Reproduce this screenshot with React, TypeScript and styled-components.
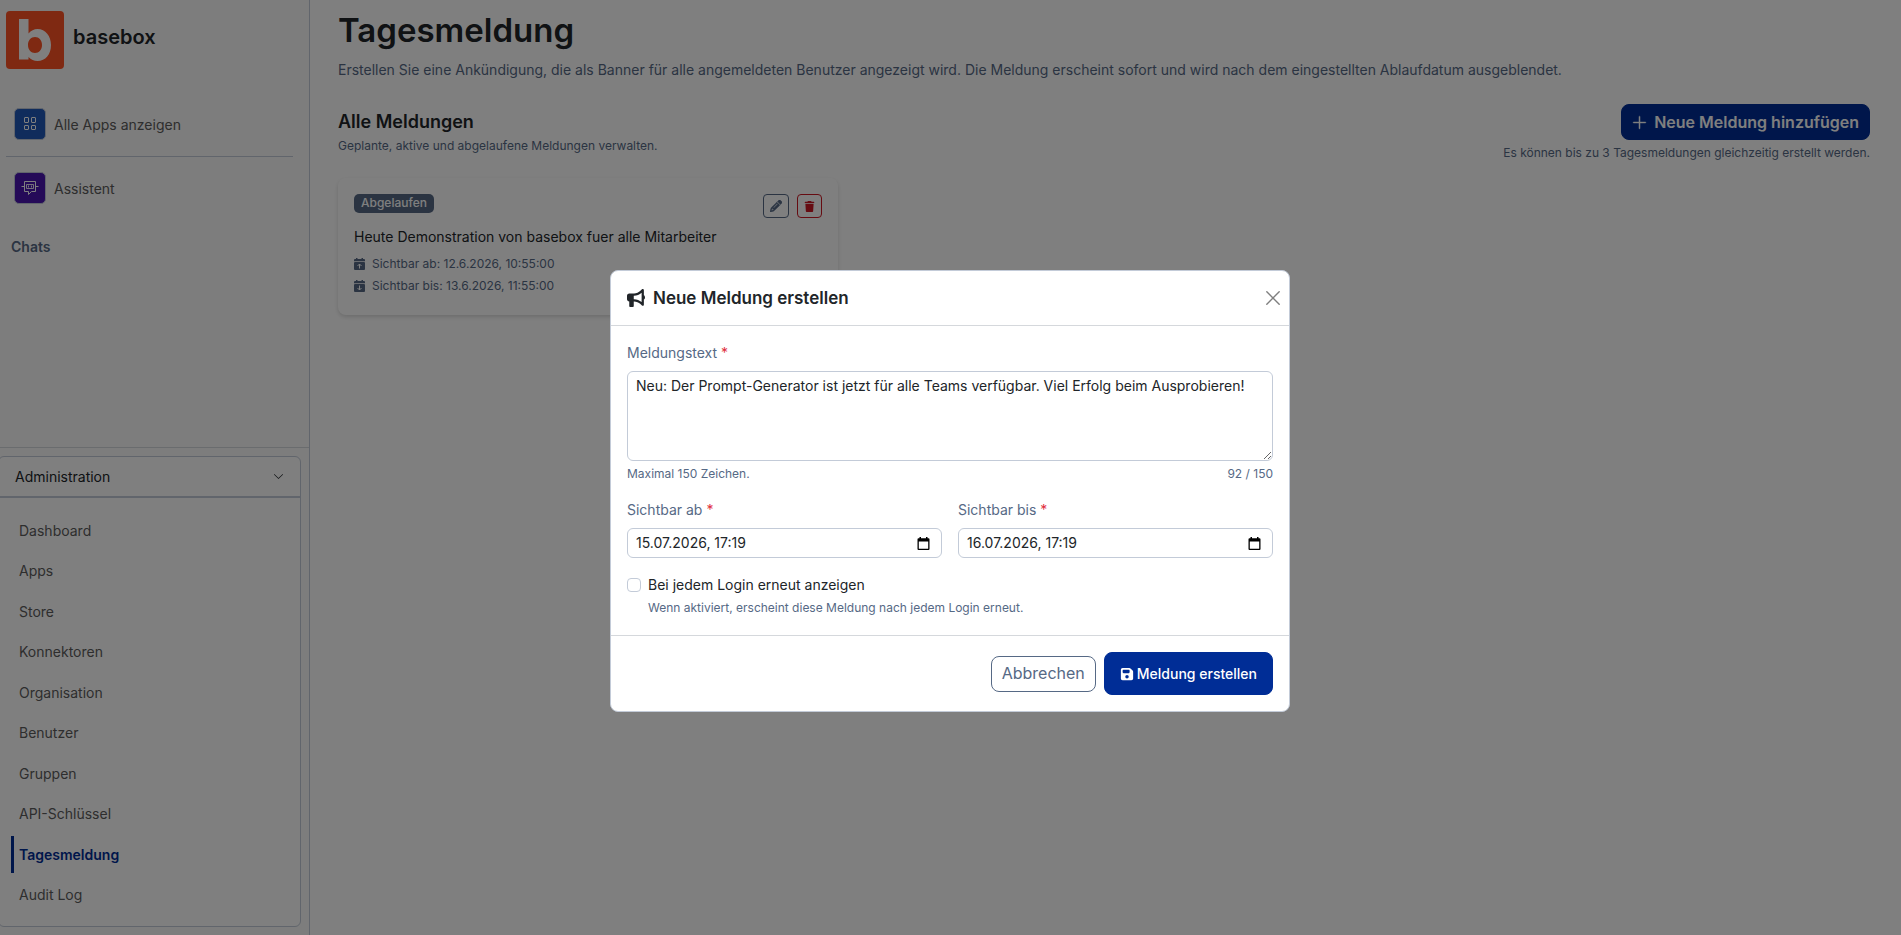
import React, { useState } from "react";
import styled, { createGlobalStyle, css } from "styled-components";
import { FaBullhorn, FaTrash, FaPencil, FaFloppyDisk } from "react-icons/fa6";
import { BsChevronDown, BsPlusLg } from "react-icons/bs";

const slate = "#566985";
const line = "#c3cbd8";
const ink = "#212529";
const primary = "#002d96";

const GlobalStyle = createGlobalStyle`
  *, *::before, *::after { box-sizing: border-box; }
  html, body, #root { height: 100%; }
  body {
    margin: 0;
    font-family: Inter, "Liberation Sans", sans-serif;
    font-size: 14px;
    line-height: 21px;
    color: ${ink};
    background: #fff;
  }
  button, input, textarea { font: inherit; color: inherit; }
  h1, h2, h3, p, ul { margin: 0; padding: 0; }
  ul { list-style: none; }
`;

const Page = styled.div`
  display: flex;
  min-height: 100%;
`;

const Sidebar = styled.aside`
  flex: 0 0 310px;
  display: flex;
  flex-direction: column;
  background: #fafafa;
  border-right: 1px solid ${line};
`;

const SidebarTop = styled.div`
  flex: 1;
  padding: 11px 16px 0 6px;
`;

const Brand = styled.a`
  display: flex;
  gap: 9px;
  color: ${ink};
  text-decoration: none;
  font-size: 20px;
  font-weight: 600;
  line-height: 52px;
`;

const AppLink = styled.a`
  display: flex;
  align-items: center;
  gap: 8px;
  height: 32px;
  padding-left: 8px;
  color: #5c5c5c;
  text-decoration: none;
`;

const AppIcon = styled.span<{ $color: string }>`
  display: flex;
  align-items: center;
  justify-content: center;
  width: 32px;
  height: 32px;
  border: 1px solid ${line};
  border-radius: 5px;
  background: ${(p) => p.$color};
  color: #fff;
`;

const AppNav = styled.nav`
  margin-top: 39px;
`;

const Divider = styled.hr`
  height: 1px;
  margin: 16px 0 15px;
  border: 0;
  background: ${line};
`;

const ChatsHeading = styled.h3`
  margin: 32px 5px 0;
  font-size: 14px;
  font-weight: 600;
  color: ${slate};
`;

const AdminSection = styled.section`
  display: flex;
  min-height: 488px;
  padding: 8px 8px 8px 0;
  border-top: 1px solid #d5d8dc;
`;

const AdminCard = styled.div`
  flex: 1;
  display: flex;
  flex-direction: column;
  margin-left: -2px;
  border: 1px solid ${line};
  border-radius: 6px;
  background: #fff;
`;

const AdminToggle = styled.button`
  display: flex;
  align-items: center;
  justify-content: space-between;
  height: 41px;
  padding: 0 16px;
  border: 0;
  border-bottom: 2px solid ${line};
  background: none;
`;

const AdminList = styled.ul`
  flex: 1;
  display: flex;
  flex-direction: column;
  justify-content: space-between;
  padding: 14px 12px 13px;
`;

const AdminLink = styled.a<{ $active?: boolean }>`
  display: block;
  padding: 8px 5px;
  border-left: 3px solid transparent;
  color: #5c5c5c;
  text-decoration: none;
  ${(p) =>
    p.$active &&
    css`
      border-color: ${primary};
      color: ${primary};
      font-weight: 600;
    `}
`;

const Main = styled.main`
  flex: 1;
  min-width: 0;
  padding: 11px 31px 32px 28px;
`;

const Title = styled.h1`
  font-size: 33px;
  line-height: 38px;
  font-weight: 600;
`;

const Lead = styled.p`
  margin-top: 10px;
  color: ${slate};
`;

const Note = styled.p`
  font-size: 12px;
  line-height: 18px;
  color: ${slate};
`;

const SectionHead = styled.header`
  display: flex;
  justify-content: space-between;
  margin-top: 24px;
`;

const SectionTitle = styled.h2`
  margin: 7px 0 4px;
  font-size: 18px;
  line-height: 22px;
  font-weight: 600;
`;

const SectionActions = styled.div`
  display: flex;
  flex-direction: column;
  align-items: flex-end;
  gap: 4px;
`;

const Button = styled.button<{ $look: "add" | "cancel" | "save" }>`
  display: inline-flex;
  align-items: center;
  border: 1px solid ${primary};
  border-radius: 8px;
  background: ${primary};
  color: #fff;
  ${(p) =>
    p.$look === "add" &&
    css`
      gap: 6px;
      height: 36px;
      padding: 0 10px 0 9px;
      font-size: 16px;
      font-weight: 600;
    `}
  ${(p) =>
    p.$look === "cancel" &&
    css`
      height: 36px;
      padding: 0 10px;
      font-size: 16px;
      border-color: ${slate};
      background: #fff;
      color: ${slate};
    `}
  ${(p) =>
    p.$look === "save" &&
    css`
      gap: 3px;
      height: 43px;
      padding: 0 15px;
      font-weight: 500;
    `}
`;

const MessageCard = styled.article`
  width: 500px;
  max-width: 100%;
  margin-top: 16px;
  padding: 16px 16px 18px;
  border-radius: 8px;
  background: #fff;
  box-shadow: 0 2px 4px rgba(0, 0, 0, 0.15);
`;

const CardTop = styled.div`
  display: flex;
  justify-content: space-between;
  align-items: flex-start;
`;

const Badge = styled.span`
  padding: 0 7px 1px;
  border-radius: 5px;
  background: ${slate};
  color: #fff;
  font-size: 12px;
  line-height: 18px;
  font-weight: 500;
`;

const CardActions = styled.div`
  display: flex;
  gap: 8px;
`;

const IconButton = styled.button<{ $danger?: boolean }>`
  display: flex;
  align-items: center;
  justify-content: center;
  height: 24px;
  padding: 0 6px;
  border: 1px solid;
  border-radius: 4px;
  background: none;
  color: ${(p) => (p.$danger ? "#cc1824" : slate)};
`;

const MessageText = styled.p`
  margin: 8px 0 6px;
`;

const DateRow = styled.p`
  display: flex;
  align-items: center;
  gap: 7px;
  color: ${slate};
  font-size: 12px;
  line-height: 22px;
`;

const Backdrop = styled.div`
  position: fixed;
  inset: 0;
  display: flex;
  justify-content: center;
  align-items: flex-start;
  padding: 270px 17px 16px 16px;
  background: rgba(0, 0, 0, 0.5);
`;

const Dialog = styled.form`
  width: 100%;
  max-width: 680px;
  border: 1px solid ${line};
  border-radius: 8px;
  background: #fff;
`;

const DialogHead = styled.header`
  display: flex;
  align-items: center;
  gap: 8px;
  height: 55px;
  padding: 0 9px 0 16px;
  border-bottom: 1px solid #d5d8dc;
`;

const DialogTitle = styled.h2`
  flex: 1;
  font-size: 17px;
  line-height: 22px;
  font-weight: 600;
`;

const CloseButton = styled.button`
  display: flex;
  padding: 0;
  border: 0;
  background: none;
  color: #7f7f7f;
`;

const DialogBody = styled.div`
  padding: 16px;
`;

const Label = styled.label`
  display: block;
  margin-bottom: 8px;
  color: ${slate};
`;

const Required = styled.span`
  color: #e02f3c;
`;

const fieldBox = css`
  display: block;
  width: 100%;
  border: 1px solid ${line};
  border-radius: 6px;
  background: #fff;
  line-height: 20px;
`;

const TextArea = styled.textarea`
  ${fieldBox}
  height: 90px;
  padding: 4px 8px;
  resize: vertical;
`;

const FieldNotes = styled.div`
  display: flex;
  justify-content: space-between;
  margin: 4px 0 16px;
`;

const DateGrid = styled.div`
  display: grid;
  grid-template-columns: 1fr 1fr;
  gap: 16px;
`;

const DateBox = styled.div`
  ${fieldBox}
  display: flex;
  align-items: center;
  height: 30px;
  padding: 0 8px;
`;

const DateInput = styled.input`
  flex: 1;
  min-width: 0;
  padding: 0;
  border: 0;
  outline: 0;
  background: none;
`;

const PickerButton = styled.button`
  display: flex;
  padding: 0 3px;
  border: 0;
  background: none;
  color: #000;
`;

const CheckRow = styled.div`
  display: flex;
  align-items: center;
  gap: 7px;
  margin-top: 16px;
`;

const Checkbox = styled.input`
  appearance: none;
  width: 14px;
  height: 14px;
  margin: 0;
  border: 1px solid ${line};
  border-radius: 4px;
  background: #fff;
  &:checked {
    background: ${primary};
  }
`;

const CheckHint = styled(Note)`
  margin: 4px 0 2px 21px;
`;

const DialogFoot = styled.footer`
  display: flex;
  align-items: center;
  justify-content: flex-end;
  gap: 8px;
  padding: 16px;
  border-top: 1px solid #d5d8dc;
`;

const Logo = () => (
  <svg width="58" height="58" viewBox="0 0 58 58" aria-hidden="true">
    <rect width="58" height="58" rx="4" fill="#ff5224" />
    <path
      fill="#fff"
      fillRule="evenodd"
      d="M13 8H22.500V22.500C25 19.500 28 18 31.500 18C39.500 18 45 25 45 34C45 43.500 39.500 50 31.500 50C28 50 25 48.500 22.500 46V48.500H13ZM29 26C24.900 26 22 29.300 22 34C22 38.700 24.900 42 29 42C33.100 42 36 38.700 36 34C36 29.300 33.100 26 29 26Z"
    />
  </svg>
);

const GridIcon = () => (
  <svg width="14" height="14" viewBox="0 0 14 14" fill="none" stroke="currentColor" aria-hidden="true">
    <rect x="1.500" y=".5" width="4" height="5" rx=".5" />
    <rect x="8.500" y=".5" width="4" height="5" rx=".5" />
    <rect x="1.500" y="8.500" width="4" height="4" rx=".5" />
    <rect x="8.500" y="8.500" width="4" height="4" rx=".5" />
  </svg>
);

const BotIcon = () => (
  <svg width="18" height="16" viewBox="0 0 18 16" fill="none" stroke="currentColor" strokeLinejoin="round" aria-hidden="true">
    <path d="M3.500 1.500H14.500V11.500H10.500L7.500 14.500V11.500H3.500Z" />
    <path d="M.5 6.500H3.500M14.500 6.500H17.500" />
    <rect x="5.500" y="4.500" width="7" height="4" strokeWidth=".9" />
    <path d="M7.500 5.500V7.500M10.500 5.500V7.500" strokeWidth=".9" />
  </svg>
);

const CalendarArrow = ({ down }: { down?: boolean }) => (
  <svg width="11" height="12" viewBox="0 0 11 12" aria-hidden="true">
    <path fill="currentColor" d="M2 0H3.500V1H7.500V0H9V1H10A1 1 0 0 1 11 2V3.300H0V2A1 1 0 0 1 1 1H2Z" />
    <rect y="4" width="11" height="8" rx="1" fill="currentColor" />
    <path
      fill="none"
      stroke="#fff"
      d={down ? "M5.500 5.500V10M3.500 8L5.500 10L7.500 8" : "M5.500 10.500V6M3.500 8L5.500 6L7.500 8"}
    />
  </svg>
);

const PickerIcon = () => (
  <svg width="13" height="13" viewBox="0 0 13 13" aria-hidden="true">
    <path
      fill="currentColor"
      fillRule="evenodd"
      d="M2.500 0H4V1.200H9V0H10.500V1.200H11.500A1 1 0 0 1 12.500 2.200V12A1 1 0 0 1 11.500 13H1.500A1 1 0 0 1 .5 12V2.200A1 1 0 0 1 1.500 1.200H2.500ZM1.800 4.500V11.700H11.200V4.500Z"
    />
  </svg>
);

const CloseIcon = () => (
  <svg width="14" height="14" viewBox="0 0 14 14" stroke="currentColor" strokeWidth="1.400" strokeLinecap="round" aria-hidden="true">
    <path d="M.8 .8L13.200 13.200M13.200 .8L.8 13.200" />
  </svg>
);

const adminItems = [
  "Dashboard",
  "Apps",
  "Store",
  "Konnektoren",
  "Organisation",
  "Benutzer",
  "Gruppen",
  "API-Schlüssel",
  "Tagesmeldung",
  "Audit Log",
];

const DateField = ({ id, label, initial }: { id: string; label: string; initial: string }) => (
  <div>
    <Label htmlFor={id}>
      {label} <Required>*</Required>
    </Label>
    <DateBox>
      <DateInput id={id} defaultValue={initial} />
      <PickerButton type="button" aria-label="Kalender öffnen">
        <PickerIcon />
      </PickerButton>
    </DateBox>
  </div>
);

export default function App() {
  const [text, setText] = useState(
    "Neu: Der Prompt-Generator ist jetzt für alle Teams verfügbar. Viel Erfolg beim Ausprobieren!"
  );

  return (
    <>
      <GlobalStyle />
      <Page>
        <Sidebar>
          <SidebarTop>
            <Brand href="#">
              <Logo />
              <span>basebox</span>
            </Brand>
            <AppNav>
              <AppLink href="#">
                <AppIcon $color="#2159b8">
                  <GridIcon />
                </AppIcon>
                Alle Apps anzeigen
              </AppLink>
              <Divider />
              <AppLink href="#">
                <AppIcon $color="#4a14b0">
                  <BotIcon />
                </AppIcon>
                Assistent
              </AppLink>
            </AppNav>
            <ChatsHeading>Chats</ChatsHeading>
          </SidebarTop>
          <AdminSection>
            <AdminCard>
              <AdminToggle type="button">
                Administration
                <BsChevronDown size={11} />
              </AdminToggle>
              <AdminList>
                {adminItems.map((item) => (
                  <li key={item}>
                    <AdminLink href="#" $active={item === "Tagesmeldung"}>
                      {item}
                    </AdminLink>
                  </li>
                ))}
              </AdminList>
            </AdminCard>
          </AdminSection>
        </Sidebar>

        <Main>
          <Title>Tagesmeldung</Title>
          <Lead>
            Erstellen Sie eine Ankündigung, die als Banner für alle angemeldeten Benutzer angezeigt wird. Die Meldung
            erscheint sofort und wird nach dem eingestellten Ablaufdatum ausgeblendet.
          </Lead>
          <SectionHead>
            <div>
              <SectionTitle>Alle Meldungen</SectionTitle>
              <Note>Geplante, aktive und abgelaufene Meldungen verwalten.</Note>
            </div>
            <SectionActions>
              <Button type="button" $look="add">
                <BsPlusLg size={17} stroke="currentColor" strokeWidth={0.4} />
                Neue Meldung hinzufügen
              </Button>
              <Note>Es können bis zu 3 Tagesmeldungen gleichzeitig erstellt werden.</Note>
            </SectionActions>
          </SectionHead>
          <MessageCard>
            <CardTop>
              <Badge>Abgelaufen</Badge>
              <CardActions>
                <IconButton type="button" aria-label="Bearbeiten">
                  <FaPencil size={12} stroke="currentColor" strokeWidth={16} />
                </IconButton>
                <IconButton type="button" aria-label="Löschen" $danger>
                  <FaTrash size={11} />
                </IconButton>
              </CardActions>
            </CardTop>
            <MessageText>Heute Demonstration von basebox fuer alle Mitarbeiter</MessageText>
            <DateRow>
              <CalendarArrow />
              Sichtbar ab: 12.6.2026, 10:55:00
            </DateRow>
            <DateRow>
              <CalendarArrow down />
              Sichtbar bis: 13.6.2026, 11:55:00
            </DateRow>
          </MessageCard>
        </Main>
      </Page>

      <Backdrop>
        <Dialog role="dialog" aria-labelledby="dialog-title" onSubmit={(e) => e.preventDefault()}>
          <DialogHead>
            <FaBullhorn size={18} />
            <DialogTitle id="dialog-title">Neue Meldung erstellen</DialogTitle>
            <CloseButton type="button" aria-label="Schließen">
              <CloseIcon />
            </CloseButton>
          </DialogHead>
          <DialogBody>
            <Label htmlFor="message">
              Meldungstext <Required>*</Required>
            </Label>
            <TextArea id="message" maxLength={150} value={text} onChange={(e) => setText(e.target.value)} />
            <FieldNotes>
              <Note>Maximal 150 Zeichen.</Note>
              <Note>{text.length} / 150</Note>
            </FieldNotes>
            <DateGrid>
              <DateField id="from" label="Sichtbar ab" initial="15.07.2026, 17:19" />
              <DateField id="until" label="Sichtbar bis" initial="16.07.2026, 17:19" />
            </DateGrid>
            <CheckRow>
              <Checkbox type="checkbox" id="repeat" />
              <label htmlFor="repeat">Bei jedem Login erneut anzeigen</label>
            </CheckRow>
            <CheckHint>Wenn aktiviert, erscheint diese Meldung nach jedem Login erneut.</CheckHint>
          </DialogBody>
          <DialogFoot>
            <Button type="button" $look="cancel">
              Abbrechen
            </Button>
            <Button type="submit" $look="save">
              <FaFloppyDisk size={14} />
              Meldung erstellen
            </Button>
          </DialogFoot>
        </Dialog>
      </Backdrop>
    </>
  );
}
